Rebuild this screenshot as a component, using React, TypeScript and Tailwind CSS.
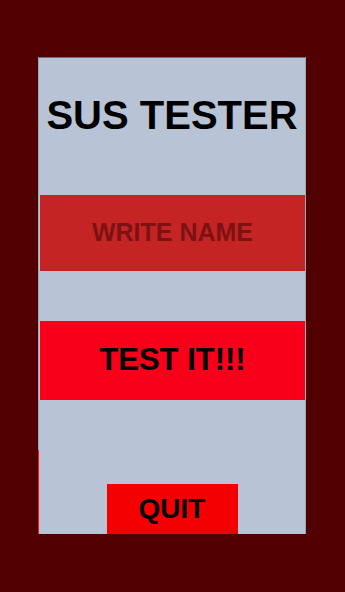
import React from "react";

export default function App() {
  return (
    <div
      className="w-[345px] h-[592px] bg-[#500000] pl-[38px] pt-[57px]"
      style={{ fontFamily: '"Liberation Sans", Arial, sans-serif' }}
    >
      {/* main panel */}
      <div className="w-[268px] h-[477px] bg-[#b8c4d6] border-t border-[#68707c] border-x border-x-[#9aa6b8] flex flex-col">
        <h1 className="mt-[37px] text-[40px] leading-[40px] font-bold text-black text-center whitespace-nowrap">
          SUS TESTER
        </h1>

        <div className="mt-[60px] ml-[1px] mr-0 h-[76px] bg-[#c42424] flex items-center justify-center">
          <span className="text-[25px] font-bold text-[#7c1212]">WRITE NAME</span>
        </div>

        <button className="mt-[50px] ml-[1px] h-[79px] bg-[#f8001a] flex items-center justify-center">
          <span className="text-[31px] font-bold text-black">TEST IT!!!</span>
        </button>

        <div className="flex-1 flex items-end justify-center border-l border-[#ff1010] mt-[50px] -ml-px">
          <button className="w-[131px] h-[50px] bg-[#f50000] flex items-center justify-center">
            <span className="text-[28px] font-bold text-black">QUIT</span>
          </button>
        </div>
      </div>
    </div>
  );
}
